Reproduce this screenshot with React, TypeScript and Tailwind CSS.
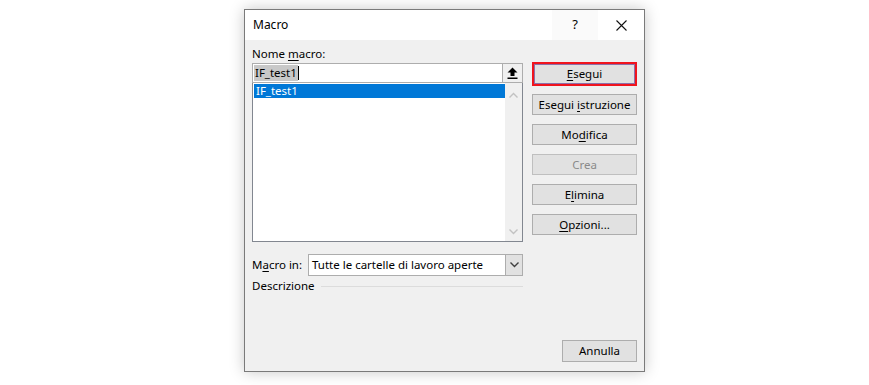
import React from 'react';

const font = { fontFamily: '"Noto Sans", "Open Sans", sans-serif' };

interface BtnProps {
    children: React.ReactNode;
    disabled?: boolean;
}

const WinButton: React.FC<BtnProps> = ({ children, disabled }) => (
    <div
        className={`h-[21px] w-full flex items-center justify-center border border-[#adadad] bg-[#e1e1e1] text-[11.5px] leading-none ${disabled ? 'text-[#8a8a8a] border-[#bfbfbf] bg-[#cccccc]/40' : 'text-black'}`}
    >
        <span>{children}</span>
    </div>
);

const U: React.FC<{ children: React.ReactNode }> = ({ children }) => (
    <span className="underline underline-offset-2 decoration-1">{children}</span>
);

const Chevron: React.FC<{ up?: boolean; color: string }> = ({ up, color }) => (
    <svg width="9" height="6" viewBox="0 0 9 6">
        <path
            d={up ? 'M0.5 5.5 L4.5 1.5 L8.5 5.5' : 'M0.5 0.5 L4.5 4.5 L8.5 0.5'}
            fill="none"
            stroke={color}
            strokeWidth="1.4"
        />
    </svg>
);

export default function App() {
    return (
        <div className="w-[869px] h-[385px] bg-white pl-[244px] pt-[9px]" style={font}>
            <div className="w-[401px] h-[363px] border border-[#7a7a7a] bg-[#f0f0f0] flex flex-col shadow-[0_0_14px_rgba(0,0,0,0.22)]">
                {/* title bar */}
                <div className="h-[30px] bg-white flex items-center">
                    <span className="pl-[8px] text-[12px] text-black flex-1">Macro</span>
                    <div className="w-[46px] h-full flex items-center justify-center bg-[#fafafa] text-[13px] text-black">?</div>
                    <div className="w-[46px] h-full flex items-center justify-center">
                        <svg width="11" height="11" viewBox="0 0 11 11">
                            <path d="M0.5 0.5 L10.5 10.5 M10.5 0.5 L0.5 10.5" stroke="#111" strokeWidth="1.1" />
                        </svg>
                    </div>
                </div>

                {/* body */}
                <div className="flex-1 flex pl-[7px] pr-[6px] pt-[6px] pb-[7px] gap-[9px]">
                    {/* left column */}
                    <div className="w-[271px] flex flex-col">
                        <div className="h-[17px] text-[11.5px] leading-[15px] text-black">
                            Nome <U>m</U>acro:
                        </div>
                        <div className="h-[20px] border border-[#adadad] bg-white flex items-center">
                            <div className="flex-1 flex items-center pl-[1px]">
                                <span className="bg-[#c8c8c8] text-[11.5px] leading-[16px] text-black px-[1px]">IF_test1</span>
                                <span className="w-px h-[14px] bg-black" />
                            </div>
                            <div className="w-[20px] h-[18px] border-l border-[#adadad] bg-[#f0f0f0] flex items-center justify-center">
                                <svg width="11" height="12" viewBox="0 0 11 12">
                                    <path d="M5.5 0.5 L10.5 5.5 L7.5 5.5 L7.5 9 L3.5 9 L3.5 5.5 L0.5 5.5 Z" fill="#000" />
                                    <rect x="0.5" y="10.5" width="10" height="1.5" fill="#000" />
                                </svg>
                            </div>
                        </div>
                        <div className="h-[159px] border border-[#828790] border-t-0 bg-white flex">
                            <div className="flex-1 pt-[1px] pl-[1px]">
                                <div className="h-[14px] bg-[#0078d7] text-white text-[11.5px] leading-[14px] pl-[2px]">IF_test1</div>
                            </div>
                            <div className="w-[17px] bg-[#f0f0f0] flex flex-col items-center justify-between pt-[9px] pb-[6px]">
                                <Chevron up color="#c2c2c2" />
                                <Chevron color="#c2c2c2" />
                            </div>
                        </div>

                        <div className="mt-[12px] h-[22px] flex items-center">
                            <span className="w-[56px] text-[11.5px] text-black">
                                M<U>a</U>cro in:
                            </span>
                            <div className="flex-1 h-full border border-[#adadad] bg-white flex items-center">
                                <span className="flex-1 pl-[3px] text-[11.5px] text-black">Tutte le cartelle di lavoro aperte</span>
                                <div className="w-[17px] h-full border-l border-[#adadad] bg-[#e1e1e1] flex items-center justify-center">
                                    <Chevron color="#404040" />
                                </div>
                            </div>
                        </div>

                        <div className="mt-[2px] h-[16px] flex items-center gap-[6px]">
                            <span className="text-[11.5px] text-black">Descrizione</span>
                            <div className="flex-1 h-px bg-[#dcdcdc]" />
                        </div>
                    </div>

                    {/* right column */}
                    <div className="w-[105px] flex flex-col pt-[16px] pb-[1px]">
                        <div className="h-[24px] border-2 border-[#f0141e] p-0 flex">
                            <div className="flex-1 border border-[#8d6fa8] bg-[#e1e1e1] flex items-center justify-center text-[11.5px] text-black">
                                <span><U>E</U>segui</span>
                            </div>
                        </div>
                        <div className="flex flex-col gap-[9px] mt-[8px]">
                            <WinButton>Esegui <U>i</U>struzione</WinButton>
                            <WinButton>Mo<U>d</U>ifica</WinButton>
                            <WinButton disabled>Crea</WinButton>
                            <WinButton>E<U>l</U>imina</WinButton>
                            <WinButton><U>O</U>pzioni...</WinButton>
                        </div>
                        <div className="flex-1" />
                        <div className="flex justify-end mb-[1px]">
                            <div className="w-[75px] h-[22px] flex">
                                <div className="flex-1 flex items-center justify-center border border-[#adadad] bg-[#e1e1e1] text-[11.5px] text-black">
                                    Annulla
                                </div>
                            </div>
                        </div>
                    </div>
                </div>
            </div>
        </div>
    );
}
